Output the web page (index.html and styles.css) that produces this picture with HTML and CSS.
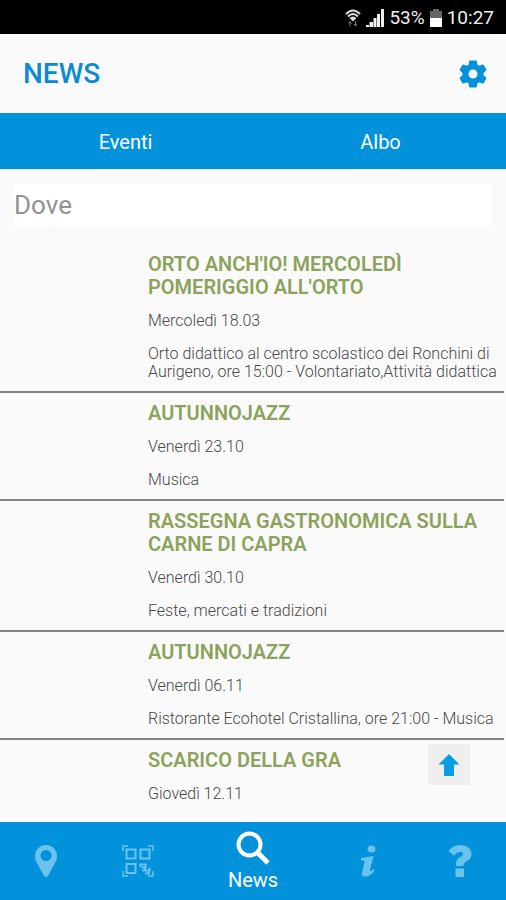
FILE: index.html
```html
<!DOCTYPE html>
<html lang="it">
<head>
<meta charset="utf-8">
<meta name="viewport" content="width=device-width, initial-scale=1">
<title>News</title>
<link rel="stylesheet" href="styles.css">
</head>
<body>
<div class="app">
  <div class="status">
    <svg class="status-wifi" viewBox="0 0 16 18" width="16" height="18" aria-hidden="true">
      <path d="M1 5Q8-2 15 5" fill="none" stroke="#ddd" stroke-width="2"/>
      <path d="M3 7.500Q8 2.500 13 7.500" fill="none" stroke="#ddd" stroke-width="2"/>
      <path d="M4.500 9Q8 6 11.500 9L8 12.500Z" fill="#ddd"/>
      <path d="M5 12.500v5M3.500 14.500 5 12.500l1.500 2M10.500 12v5M9 15l1.500 2 1.500-2" fill="none" stroke="#777" stroke-width="1"/>
    </svg>
    <svg class="status-signal" viewBox="0 0 18 18" width="18" height="18" aria-hidden="true">
      <path d="M0 18v-2h3v2zM3.500 18v-5h3.500v5zM7.500 18V9h3v9zM11 18V5h3v13zM15 18V0h3v18z" fill="#eee"/>
    </svg>
    <span>53%</span>
    <svg class="status-battery" viewBox="0 0 12 18" width="12" height="18" aria-hidden="true">
      <path d="M0 2h3V0h6v2h3v7H0z" fill="#666"/>
      <path d="M0 9h12v9H0z" fill="#fff"/>
    </svg>
    <span>10:27</span>
  </div>

  <header class="header">
    <h1>NEWS</h1>
    <button class="settings" type="button" aria-label="Impostazioni">
      <svg viewBox="0 0 28 28" width="28" height="28" aria-hidden="true">
        <path fill-rule="evenodd" fill="#0292dc" d="M10 1.500Q10.200.5 11.200.5h5.600q1 0 1.200 1l.3 3 2 1.200 2.900-1.100q1-.3 1.500.5l2.500 4.200q.5.900-.3 1.500l-2.300 1.900v2.600l2.300 1.900q.8.600.3 1.500l-2.500 4.200q-.5.800-1.500.5l-2.900-1.100-2 1.200-.3 3q-.2 1-1.200 1h-5.600q-1 0-1.200-1l-.3-3-2-1.200-2.900 1.100q-1 .3-1.500-.5L.8 18.700q-.5-.9.300-1.500l2.300-1.900v-2.600L1.100 10.800q-.8-.6-.3-1.500l2.500-4.200q.5-.8 1.500-.5l2.900 1.100 2-1.200zM14 9.500a4.500 4.500 0 1 0 0 9 4.500 4.500 0 0 0 0-9z"/>
      </svg>
    </button>
  </header>

  <div class="tabs">
    <button type="button">Eventi</button>
    <button type="button">Albo</button>
  </div>

  <main class="content">
    <div class="search"><input type="text" placeholder="Dove" aria-label="Dove"></div>
    <div class="events">
      <article class="event">
        <h2>ORTO ANCH'IO! MERCOLEDÌ POMERIGGIO ALL'ORTO</h2>
        <p class="date">Mercoledì 18.03</p>
        <p>Orto didattico al centro scolastico dei Ronchini di Aurigeno, ore 15:00 - Volontariato,Attività didattica</p>
      </article>
      <article class="event">
        <h2>AUTUNNOJAZZ</h2>
        <p class="date">Venerdì 23.10</p>
        <p>Musica</p>
      </article>
      <article class="event">
        <h2>RASSEGNA GASTRONOMICA SULLA CARNE DI CAPRA</h2>
        <p class="date">Venerdì 30.10</p>
        <p>Feste, mercati e tradizioni</p>
      </article>
      <article class="event">
        <h2>AUTUNNOJAZZ</h2>
        <p class="date">Venerdì 06.11</p>
        <p>Ristorante Ecohotel Cristallina, ore 21:00 - Musica</p>
      </article>
      <article class="event">
        <h2>SCARICO DELLA GRA</h2>
        <p class="date">Giovedì 12.11</p>
      </article>
    </div>
    <button class="to-top" type="button" aria-label="Torna su">
      <svg viewBox="0 0 22 22" width="22" height="22" aria-hidden="true">
        <path d="M11 0 21.500 10.500H16V22H6V10.500H.5z" fill="#089ce4"/>
      </svg>
    </button>
  </main>

  <nav class="nav">
    <a href="#mappa" aria-label="Mappa">
      <svg viewBox="0 0 22 32" width="22" height="32" aria-hidden="true">
        <path fill-rule="evenodd" fill="#6bc2ec" d="M11 0a11 11 0 0 1 11 11c0 3-1 5-2 7l-7 13q-2 2-4 0L2 18c-1-2-2-4-2-7A11 11 0 0 1 11 0zm0 5a5.500 5.500 0 1 0 0 11 5.500 5.500 0 0 0 0-11z"/>
      </svg>
    </a>
    <a href="#codice" aria-label="Codice QR">
      <svg viewBox="0 0 32 32" width="32" height="32" aria-hidden="true" fill="none" stroke="#6bc2ec">
        <path stroke-width="1.500" d="M1 6V1h5M26 1h5v5M1 26v5h5M31 26v5h-5"/>
        <path stroke-width="2" d="M4.500 4.500h9v9h-9zM18.500 4.500h9v9h-9zM4.500 19h9v9h-9z"/>
        <path stroke-width="2" d="M18.500 22v-2.500h5v3h-4M23 22v3.500h4.500v-3M23 25.500h-3M27 25v3.500h-4"/>
      </svg>
    </a>
    <a class="active" href="#news">
      <svg viewBox="0 0 34 34" width="34" height="34" aria-hidden="true" fill="none" stroke="#fff">
        <circle cx="13.500" cy="13.500" r="11" stroke-width="4"/>
        <path d="m21 21 11 11" stroke-width="5"/>
      </svg>
      <span>News</span>
    </a>
    <a href="#info" aria-label="Informazioni">
      <svg viewBox="0 0 16 32" width="16" height="32" aria-hidden="true">
        <ellipse cx="11.500" cy="4" rx="4" ry="3.500" fill="#6bc2ec"/>
        <path fill="#6bc2ec" d="M1.500 13q6-1 12-2L10 24.500q-.5 2 1 1.500 1.500-1 2.500-2l1 1Q11 31 6 31.500q-5 .5-4-4L4.500 17q.5-1.500-1-1.500H.5z"/>
      </svg>
    </a>
    <a href="#aiuto" aria-label="Aiuto">
      <svg viewBox="0 0 24 32" width="24" height="32" aria-hidden="true">
        <path fill="#6bc2ec" d="M.5 6Q5 0 12 0c7 0 11.500 3.500 11.500 9 0 4-2.500 6-5 7.500-2 1.200-3 2-3 3.500v1H8v-2c0-4 2-5.500 4.500-7 1.500-1 2.500-1.700 2.500-3 0-3-5.500-3-9 1.500zM7.500 23.500h8.500V32H7.500z"/>
      </svg>
    </a>
  </nav>
</div>
</body>
</html>
```
FILE: styles.css
```css
* {
  box-sizing: border-box;
}

body {
  margin: 0;
  background: #fafafa;
  font-family: Roboto, "Liberation Sans", sans-serif;
}

h1,
h2,
p {
  margin: 0;
}

button {
  padding: 0;
  border: 0;
  background: none;
  font: inherit;
}

svg {
  display: block;
}

.app {
  display: flex;
  flex-direction: column;
  height: 100vh;
}

.status {
  display: flex;
  flex: none;
  align-items: center;
  justify-content: flex-end;
  height: 34px;
  padding: 2px 12px 0;
  gap: 5px;
  background: #000;
  color: #eee;
  font-size: 19px;
  line-height: 24px;
}

.header {
  display: flex;
  flex: none;
  align-items: center;
  justify-content: space-between;
  height: 79px;
  padding: 0 19px 0 23px;
  color: #0c8bd4;
}

.header h1 {
  font-size: 28px;
  font-weight: 500;
  line-height: 32px;
}

.tabs {
  display: flex;
  flex: none;
  gap: 4px;
  height: 56px;
  padding-top: 2px;
  background: #0292dc;
}

.tabs button {
  flex: 1;
  color: #fff;
  font-size: 20px;
}

.content {
  position: relative;
  flex: 1;
  min-height: 0;
  overflow: hidden;
}

.search {
  padding: 15px 14px 18px;
}

.search input {
  display: block;
  width: 100%;
  height: 42px;
  padding: 0;
  border: 0;
  background: #fff;
  color: #444;
  font: 26px Roboto, "Liberation Sans", sans-serif;
}

.search input::placeholder {
  color: #929292;
  opacity: 1;
}

.events {
  margin-right: 2px;
}

.event {
  padding: 9px 4px 10px 148px;
  border-bottom: 2px solid #858585;
  color: #484848;
  font-size: 16px;
  font-weight: 300;
  line-height: 18px;
}

.event:last-child {
  border-bottom: 0;
}

.event h2 {
  margin-bottom: 13px;
  color: #8da35c;
  font-size: 20px;
  font-weight: 600;
  line-height: 23px;
}

.event .date {
  margin-bottom: 15px;
}

.to-top {
  position: absolute;
  right: 36px;
  bottom: 37px;
  display: flex;
  align-items: center;
  justify-content: center;
  width: 42px;
  height: 41px;
  background: #efefef;
}

.nav {
  display: flex;
  flex: none;
  height: 78px;
  background: #0292dc;
}

.nav a {
  display: flex;
  flex: 2;
  flex-direction: column;
  align-items: center;
  justify-content: center;
  gap: 3px;
  color: #fff;
  font-size: 20px;
  line-height: 24px;
  text-decoration: none;
}

.nav .active {
  flex: 3;
}
```
